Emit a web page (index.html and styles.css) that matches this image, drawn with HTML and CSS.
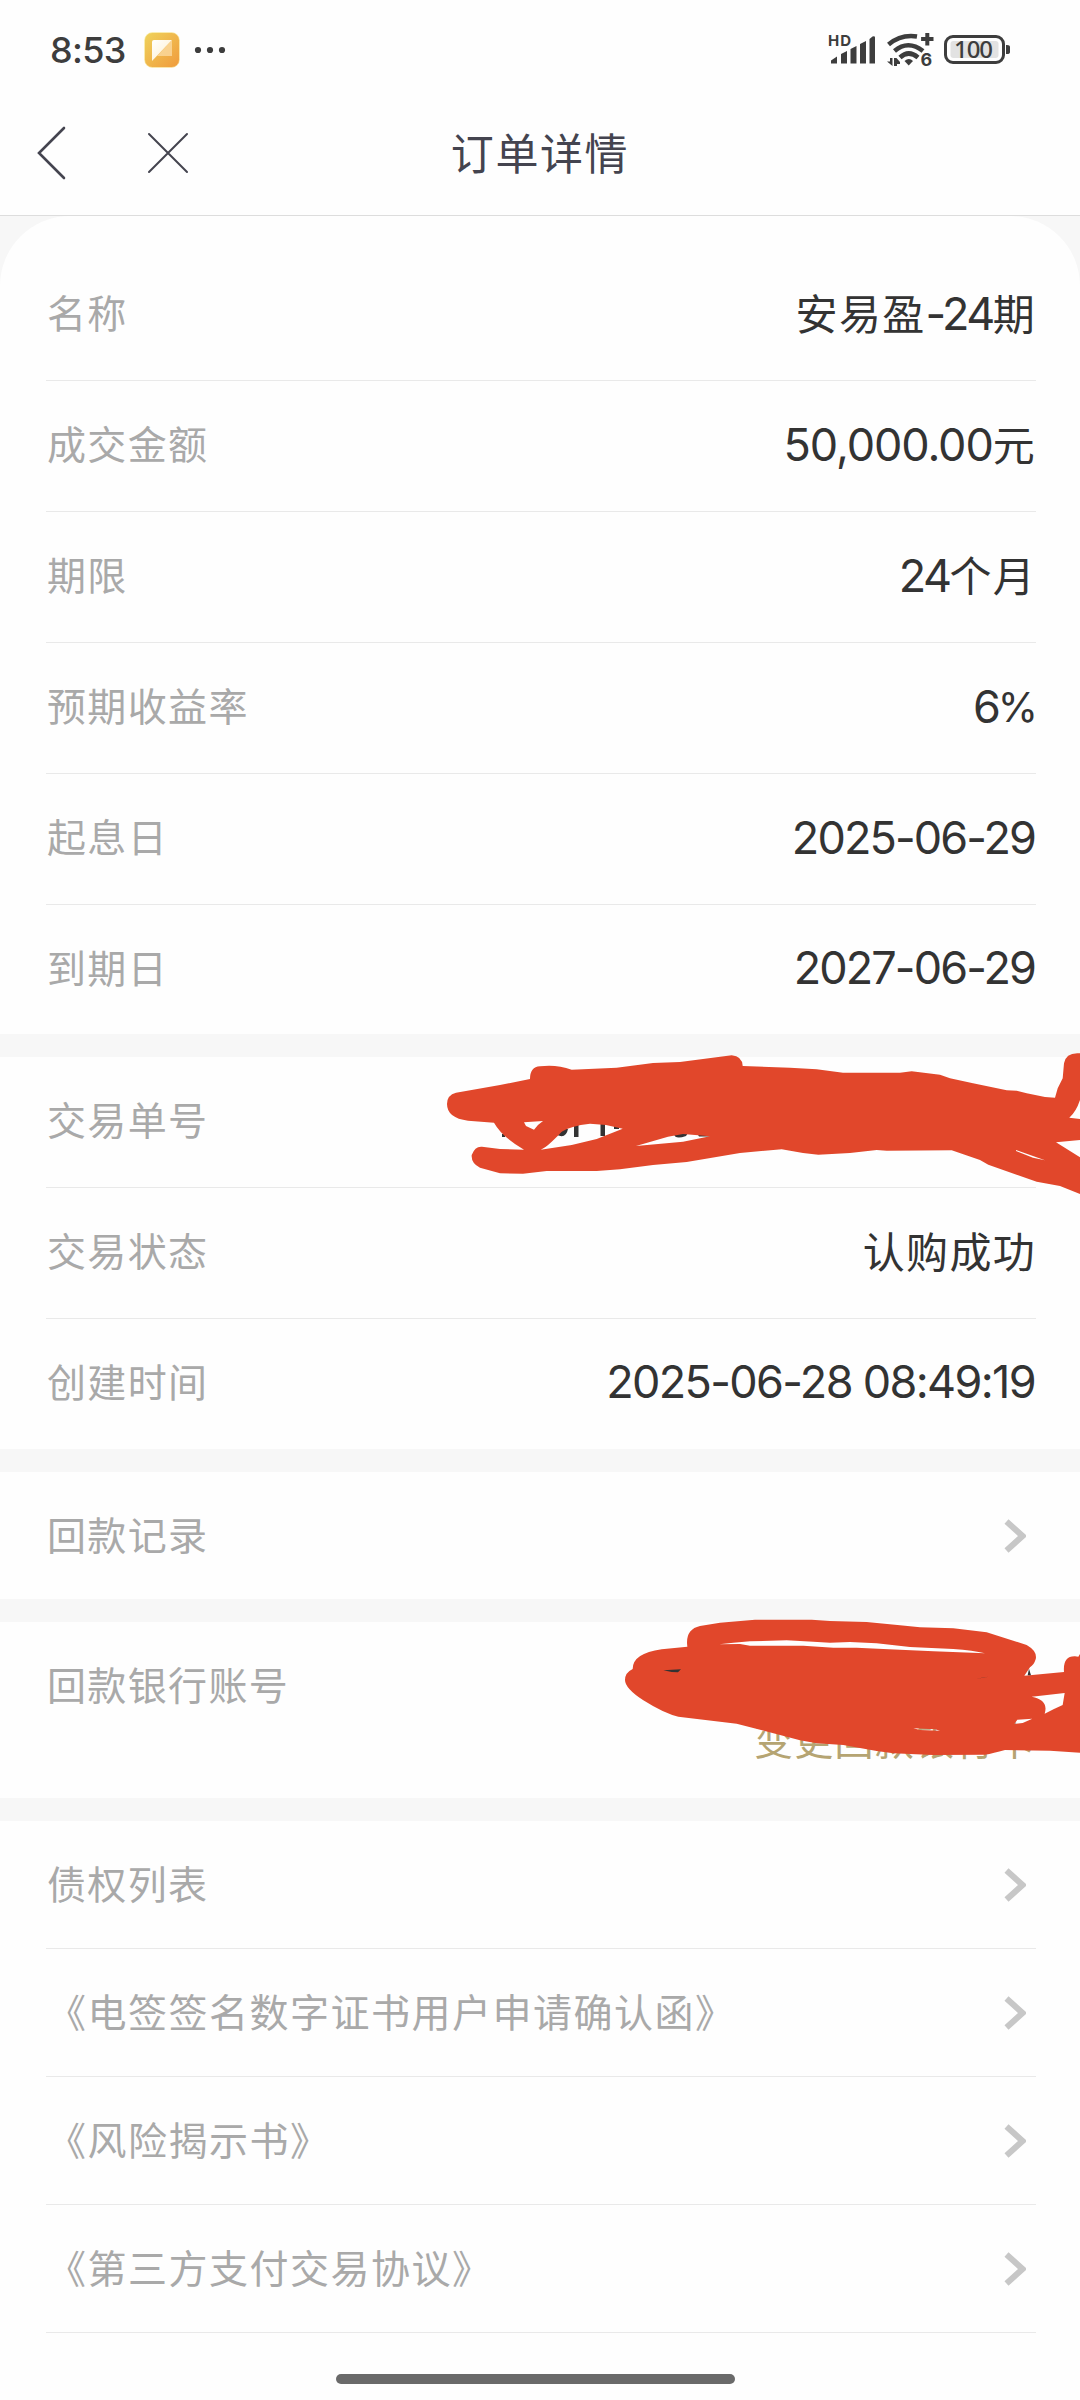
FILE: index.html
```html
<!DOCTYPE html>
<html lang="zh-CN">
<head>
<meta charset="utf-8">
<title>订单详情</title>
<link rel="stylesheet" href="styles.css">
</head>
<body>
<div class="screen">
  <header class="status">
    <div class="status-left">
      <span class="clock">8:53</span>
      <svg class="app-badge" width="40" height="40" viewBox="0 0 40 40">
        <defs>
          <linearGradient id="gold" x1="0" y1="0" x2="1" y2="1"><stop offset="0" stop-color="#efd35c"/><stop offset="1" stop-color="#f09a3c"/></linearGradient>
          <linearGradient id="fold" x1="0" y1="0" x2="1" y2="1"><stop offset="0" stop-color="#fff"/><stop offset="1" stop-color="#fdeecb"/></linearGradient>
        </defs>
        <rect x="2.500" y="2.500" width="35" height="35" rx="8" fill="url(#gold)" stroke="#fbf3b4" stroke-opacity=".6"/>
        <path d="M10 12q0-2 2-2h18L10 31z" fill="url(#fold)"/>
        <path d="M30 10v16H15z" fill="#fbd9a0" fill-opacity=".8"/>
      </svg>
      <svg width="32" height="8" viewBox="0 0 32 8" fill="#3d3d3d"><circle cx="4" cy="4" r="3.100"/><circle cx="16" cy="4" r="3.100"/><circle cx="28" cy="4" r="3.100"/></svg>
    </div>
    <svg class="status-right" width="184" height="40" viewBox="826 30 184 40" fill="#3d3d3d">
      <text class="hd" x="828" y="45.500" textLength="23">HD</text>
      <path d="M831 63.500v-3l6-4v7zM841 63.500V54l6-3v12.500zM850.500 63.500V49l6-3v17.500zM860 63.500V44l6-3v22.500zM869.500 63.500V39l3-2.500q2.500-1 2.500 1v26z"/>
      <g fill="none" stroke="#3d3d3d" stroke-width="4.600">
        <path d="M888.500 44.500Q901 34 917 36.500"/><path d="M894.500 51Q908 39.500 923 51"/><path d="M900 57.500q8.500-8 18 0"/>
      </g>
      <path d="M904.500 61q4.500-4 8.500 0l-4.300 4.500z"/>
      <path d="M925.300 33h4v4h4.200v4h-4.200v4.500h-4V41h-4.200v-4h4.200z"/>
      <path d="M887 61.500h3V58h2.500v8zM894 58h2.500l3.500 4v2h-3v2h-3z"/>
      <text class="gen" x="920.500" y="66">6</text>
      <rect x="945.500" y="36.500" width="58" height="26" rx="7.500" fill="none" stroke="#3d3d3d" stroke-width="3"/>
      <rect x="950.500" y="41" width="48" height="17" rx="3" fill="#e2e2e2"/>
      <path d="M1006 45h1q3 0 3 2v5q0 2-3 2h-1z"/>
      <text class="charge" x="954" y="58" textLength="39">100</text>
    </svg>
  </header>

  <nav class="navbar">
    <svg class="back" width="30" height="56" viewBox="0 0 30 56"><path d="M28 3 3 28l25 25"/></svg>
    <svg class="close" width="42" height="42" viewBox="0 0 42 42"><path d="m2 2 38 38M40 2 2 40"/></svg>
    <h1 class="title">订单详情</h1>
  </nav>

  <main class="content">
    <section class="group group-first">
      <div class="row"><span class="label">名称</span><span class="value"><span>安易盈</span><span class="num num-term">-24</span><span>期</span></span></div>
      <div class="row"><span class="label">成交金额</span><span class="value"><span class="num">50,000.00</span><span>元</span></span></div>
      <div class="row"><span class="label">期限</span><span class="value"><span class="num num-term">24</span><span>个月</span></span></div>
      <div class="row"><span class="label">预期收益率</span><span class="value"><span class="num">6</span><span class="num num-percent">%</span></span></div>
      <div class="row"><span class="label">起息日</span><span class="value"><span class="num num-date">2025-06-29</span></span></div>
      <div class="row"><span class="label">到期日</span><span class="value"><span class="num num-date">2027-06-29</span></span></div>
    </section>

    <section class="group group-trade">
      <div class="row"><span class="label">交易单号</span></div>
      <div class="row"><span class="label">交易状态</span><span class="value"><span>认购成功</span></span></div>
      <div class="row"><span class="label">创建时间</span><span class="value"><span class="num num-time">2025-06-28 08:49:19</span></span></div>
    </section>

    <section class="group">
      <div class="row row-link row-last"><span class="label">回款记录</span><svg class="chevron" width="22" height="34" viewBox="0 0 22 34"><path d="m2.500 2.500 16 14.500-16 14.500"/></svg></div>
    </section>

    <section class="group group-bank">
      <span class="label">回款银行账号</span>
      <span class="change">变更回款银行卡</span>
    </section>

    <section class="group">
      <div class="row row-link"><span class="label">债权列表</span><svg class="chevron" width="22" height="34" viewBox="0 0 22 34"><path d="m2.500 2.500 16 14.500-16 14.500"/></svg></div>
      <div class="row row-link"><span class="label doc">《电签签名数字证书用户申请确认函》</span><svg class="chevron" width="22" height="34" viewBox="0 0 22 34"><path d="m2.500 2.500 16 14.500-16 14.500"/></svg></div>
      <div class="row row-link"><span class="label doc">《风险揭示书》</span><svg class="chevron" width="22" height="34" viewBox="0 0 22 34"><path d="m2.500 2.500 16 14.500-16 14.500"/></svg></div>
      <div class="row row-link"><span class="label doc">《第三方支付交易协议》</span><svg class="chevron" width="22" height="34" viewBox="0 0 22 34"><path d="m2.500 2.500 16 14.500-16 14.500"/></svg></div>
    </section>
  </main>

  <div class="home-bar"></div>

  <svg class="marker" width="1080" height="2400" viewBox="0 0 1080 2400">
    <path class="ink" d="M502 1134h3v3h-3zM557 1135q9 4 11-6h-4zM574 1122h4.500v15H574zM600.500 1122h4.500v14h-4.500zM614 1124h5v5h-5zM674 1134q1 6 12 2l2-3zM697 1133h14v3.500h-12z"/>
    <path class="red" fill-rule="evenodd" d="M447 1104Q447 1095 456 1092.700L500 1085 530 1079Q530 1067 540 1066.300Q556 1064 571.700 1069.700L616.700 1067.700 653 1063 680 1062 731.700 1055.300Q742 1056 742.700 1066L790 1067.700 816.700 1069.300 843 1072.700H900L911.700 1071.300 940 1074.700 950 1078.300 973 1083.300 1006.700 1090.300 1016.700 1090.700 1026.700 1093.300 1045 1097 1055 1097.700 1057.700 1088.300 1062.700 1078.300 1064 1063.300Q1066 1052 1080 1053.300V1100Q1076 1112 1069.300 1117.700L1080 1119V1140L1056 1142.300 1080 1157.300V1194L1060 1186 1036.700 1181.700 988.300 1164.700 980 1160 951.700 1150.300 886.700 1150.700 876.700 1150 850 1153 818.300 1154.700 803 1153 781.700 1149.300 740 1153 686.700 1162 653 1165 620 1169.300 596.700 1171H546.700L523 1173.700 500 1173.300 480 1167.700Q471 1163 471.700 1155Q475 1146 482 1146.700L500 1149 524 1149.700Q502 1137 494 1122.700L468 1120.700Q447 1118 447 1104ZM524 1122.300 543 1121Q537 1125 534 1129.700L526 1126ZM540.700 1149.700Q545 1148 551.700 1141.700T561.700 1131.700Q570 1126 590 1123.700L606 1125 622.700 1128.700 596.700 1139 571.700 1145ZM636 1146 668 1136.700 683 1134 710 1136.300 683 1141.700ZM1016 1150 1045 1160.300 1033 1157.700 1016 1151Z"/>
    <g transform="translate(600 1590) scale(.33333)">
      <path class="red" fill-rule="evenodd" d="M75 270Q75 248 98 237Q98 190 185 178L262 170Q255 118 300 108L360 98 465 89H635L690 93 800 96 900 106 960 112 1060 115 1160 127 1280 165Q1313 184 1307 208Q1302 225 1290 232L1273 257 1392 246Q1388 198 1425 199L1435 200 1440 192V488L1350 482 1215 480Q1180 490 1155 494L1000 495 880 490 830 483 730 465 650 460 600 451 410 401 235 380Q195 372 130 331Q75 295 75 270ZM358 163 400 158 450 154 560 151 640 155 690 158 750 156 830 160 930 171 1060 177 Q1120 181 1155 190L1000 184 850 177 770 173 700 173 610 167 450 167 420 162ZM1295 320 1394 309 1388 345 1362 357 1334 371Q1347 330 1295 320ZM1252 389 1297 386 1268 399 1243 402ZM940 415 1005 418 1020 422 960 420Z"/>
      <path class="ink" d="M190 241 243 238 234 247 215 246ZM1287 236 1293 256 1283 256ZM1128 266 1165 260 1150 263Z"/>
    </g>
  </svg>
</div>
</body>
</html>
```
FILE: styles.css
```css
* { box-sizing: border-box; }
body { margin: 0; background: #fefefe; }
.screen {
  position: relative;
  width: 1080px;
  height: 2400px;
  overflow: hidden;
  display: flex;
  flex-direction: column;
  background: #fefefe;
  font-family: "Noto Sans CJK SC", sans-serif;
}
.status {
  height: 100px;
  display: flex;
  justify-content: space-between;
  align-items: center;
  padding: 0 70px 0 50px;
}
.status-left { display: flex; align-items: center; }
.clock {
  width: 92px;
  font: 500 36px/50px Inter, sans-serif;
  letter-spacing: -.7px;
  color: #3d3d3d;
}
.app-badge { margin-right: 12px; }
.status-right { flex: none; }
.hd { font: 700 15px Inter, sans-serif; }
.gen { font: 700 18px Inter, sans-serif; }
.charge { font: 500 24px "Noto Sans", sans-serif; }

.navbar {
  height: 116px;
  display: grid;
  grid-template-columns: 36px 76px 42px 1fr 154px;
  align-items: center;
  border-bottom: 1px solid #ddd;
}
.navbar svg { fill: none; stroke: #44444f; stroke-linecap: round; }
.back { grid-column: 1 / span 2; margin: 0 0 10px 36px; stroke-width: 2.600px; }
.close { grid-column: 3; margin: 0 0 10px 35px; stroke-width: 2px; overflow: visible; }
.title {
  grid-column: 4;
  margin: 0 0 14px;
  text-align: center;
  font-weight: 400;
  font-size: 43px;
  line-height: 60px;
  letter-spacing: 1.600px;
  color: #44444f;
}

.content {
  display: flex;
  flex-direction: column;
  gap: 23px;
  background: #f7f7f7;
}
.group { background: #fefefe; padding: 0 44px 0 46px; }
.group-first { height: 818px; padding-top: 34px; border-radius: 70px 70px 0 0; }
.group-trade { height: 392px; }
.row {
  height: 131px;
  display: flex;
  align-items: center;
  justify-content: space-between;
  border-bottom: 1px solid #e9e9e9;
}
.group-first .row:last-child, .group-trade .row:last-child { height: 129px; border-bottom: 0; }
.row-link { height: 128px; }
.row-last { height: 127px; border-bottom: 0; }
.label {
  padding: 0 0 8px 1px;
  font-size: 39px;
  line-height: 56px;
  letter-spacing: 1.350px;
  color: #a9a9a9;
}
.row-link .label { padding-bottom: 6px; }
.row-link .doc { padding-left: 1px; letter-spacing: 1.500px; }
.value {
  display: flex;
  align-items: center;
  padding-bottom: 6px;
  font-size: 42px;
  line-height: 60px;
  letter-spacing: 1.300px;
  color: #333;
}
.num {
  padding-top: 3px;
  font-family: Inter, sans-serif;
  font-size: 45px;
  letter-spacing: -1.100px;
}
.num-term { letter-spacing: -2.600px; }
.num-date { padding-right: 1px; letter-spacing: -1.900px; }
.num-time { padding-right: 1px; letter-spacing: -1.650px; }
.num-percent { margin-left: -2px; letter-spacing: -2px; font-size: 41px; }
.chevron { margin-right: 10px; fill: none; stroke: #c7c7c7; stroke-width: 6px; }
.group-bank { height: 176px; display: flex; flex-direction: column; padding-top: 33px; }
.change {
  align-self: flex-end;
  margin-top: -9px;
  font-size: 39px;
  line-height: 56px;
  letter-spacing: 1.300px;
  color: #b5a472;
}
.home-bar {
  width: 399px;
  height: 10px;
  margin: 41px 0 0 336px;
  border-radius: 5px;
  background: #6a6a6a;
}
.marker { position: absolute; left: 0; top: 0; }
.red { fill: #e1472b; }
.ink { fill: #333; }
```
